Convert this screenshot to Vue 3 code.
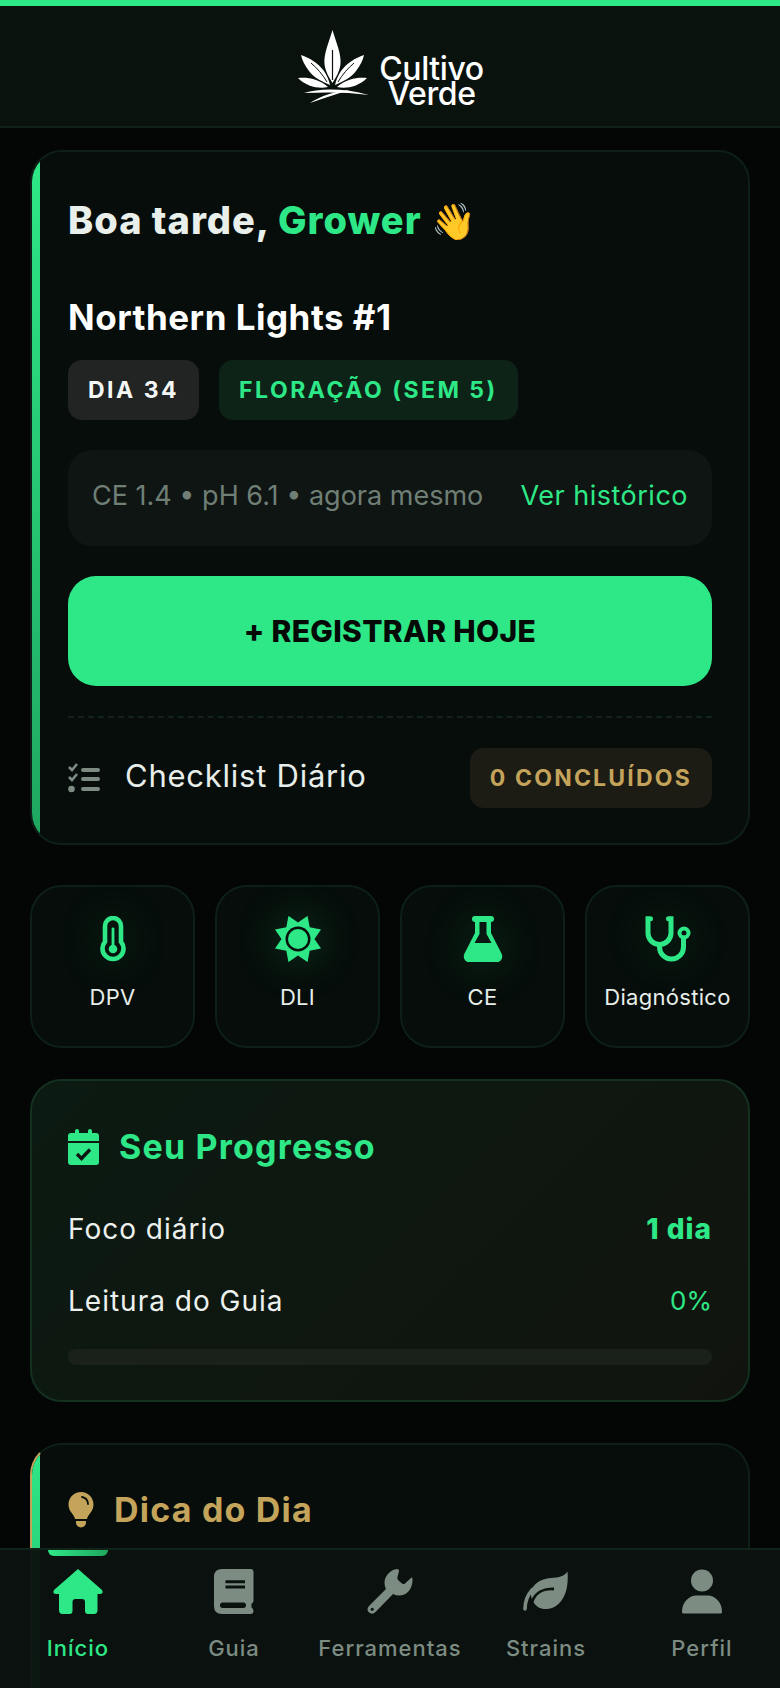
<template>
  <div class="app">
    <header class="header">
      <div class="logo">
        <svg class="logo__mark" viewBox="0 0 72 74" fill="#fff">
          <path d="M34.5 0C38 12 43.500 24 42.500 34C41.500 42 37.500 48 34.500 53C31.500 48 27.500 42 26.500 34C25.500 24 31 12 34.500 0Z" />
          <path d="M34.500 20V50" stroke="#0a120e" stroke-width="1.200" />
          <g v-for="side in logoSides" :key="side" :transform="side">
            <path d="M3 25C12 28 20 33 26 41C29 46 31 50 32 55C25 52 16 48 11 41C7 36 4 30 3 25Z" />
            <path d="M13 33C19 38 25 45 29 52" fill="none" stroke="#0a120e" stroke-width="1" />
            <path d="M0 48C8 47 20 48 30 57C21 59 9 57 0 48Z" />
          </g>
          <path d="M6 63C22 58 46 58 71 65C50 62 28 62 6 63Z" />
          <path d="M12 73C22 66 38 61 52 60C38 64 26 68 12 73Z" />
        </svg>
        <div class="logo__text">{{ "Cultivo\nVerde" }}</div>
      </div>
    </header>

    <main class="main">
      <section class="card card--hero">
        <h1 class="greeting">Boa tarde, <em>Grower</em> <span class="greeting__wave">👋</span></h1>
        <h2 class="plant">Northern Lights #1</h2>
        <div class="chips">
          <span class="chip chip--grey">DIA 34</span>
          <span class="chip chip--green">FLORAÇÃO (SEM 5)</span>
        </div>
        <div class="reading">
          <span class="reading__values">CE 1.4 • pH 6.1 • agora mesmo</span>
          <a class="reading__link">Ver histórico</a>
        </div>
        <button class="cta">+ REGISTRAR HOJE</button>
        <div class="checklist">
          <svg class="checklist__icon" viewBox="0 0 32 30" fill="none" stroke="#7c8c82">
            <path d="M1 4l3 3 5-6M1 14l3 3 5-6" stroke-width="2.600" />
            <path d="M15 7h15M15 16h15M15 26h15" stroke-width="4" stroke-linecap="round" />
            <circle cx="3.500" cy="26" r="3.300" fill="#7c8c82" stroke="none" />
          </svg>
          <span class="checklist__label">Checklist Diário</span>
          <span class="chip chip--gold">0 CONCLUÍDOS</span>
        </div>
      </section>

      <nav class="tools">
        <a class="tool">
          <svg class="tool__icon" width="26" height="46" viewBox="0 0 26 46" fill="none" stroke="#2ee887">
            <path d="M5 25.700V10a8 8 0 0 1 16 0v15.700a10.500 10.500 0 1 1-16 0z" stroke-width="4.600" />
            <path d="M13 13v18" stroke-width="2.800" stroke-linecap="round" />
            <circle cx="13" cy="33" r="4.300" fill="#2ee887" stroke="none" />
          </svg>
          <span>DPV</span>
        </a>
        <a class="tool">
          <svg class="tool__icon" width="46" height="46" viewBox="0 0 46 46">
            <polygon :points="sunPoints" fill="#2ee887" />
            <circle cx="23" cy="23" r="12.500" fill="#07110c" />
            <circle cx="23" cy="23" r="10" fill="#2ee887" />
          </svg>
          <span>DLI</span>
        </a>
        <a class="tool">
          <svg class="tool__icon" width="40" height="46" viewBox="0 0 40 46" fill="#2ee887">
            <path fill-rule="evenodd" d="M12 4V17L1.500 37.500C-.5 41.500 2 46 6 46H34C38 46 40.500 41.500 38.500 37.500L28 17V4ZM16.500 5V18L11.500 27H28.500L23.500 18V5Z" />
            <rect x="9" width="22" height="6" rx="3" />
          </svg>
          <span>CE</span>
        </a>
        <a class="tool">
          <svg class="tool__icon" width="46" height="46" viewBox="0 0 46 46" fill="none" stroke="#2ee887" stroke-width="5" stroke-linecap="round">
            <path d="M5.500 2.800H3V17a11.500 11.500 0 0 0 23 0V2.800H23.500" />
            <path d="M14.500 29v2a12 12 0 0 0 24 0v-9" />
            <circle cx="39" cy="17" r="4.500" stroke-width="4" />
          </svg>
          <span>Diagnóstico</span>
        </a>
      </nav>

      <section class="card card--progress">
        <h3 class="section-title section-title--green">
          <svg width="31" height="36" viewBox="0 0 31 36" fill="#2ee887">
            <rect x="7" width="4" height="7" rx="2" />
            <rect x="20" width="4" height="7" rx="2" />
            <path d="M3 4h25a3 3 0 0 1 3 3v5H0V7a3 3 0 0 1 3-3z" />
            <path d="M0 14h31v19a3 3 0 0 1-3 3H3a3 3 0 0 1-3-3z" />
            <path d="M9 25l4.500 4.500 8.500-9" fill="none" stroke="#0b1610" stroke-width="3.400" />
          </svg>
          Seu Progresso
        </h3>
        <div class="stat stat--first">
          <span>Foco diário</span>
          <strong>1 dia</strong>
        </div>
        <div class="stat">
          <span>Leitura do Guia</span>
          <span class="stat__value">{{ guideProgress }}%</span>
        </div>
        <div class="bar">
          <div class="bar__fill" :style="{ width: guideProgress + '%' }"></div>
        </div>
      </section>

      <section class="card card--tip">
        <h3 class="section-title section-title--gold">
          <svg width="26" height="36" viewBox="0 0 26 36" fill="#c4a35a">
            <path d="M13 0C5.800 0 .5 5.600.5 12.500c0 3.200 1.200 6 3 8.200 1.600 2 3 3.800 3.500 6.300h12c.5-2.500 1.900-4.300 3.500-6.300 1.800-2.200 3-5 3-8.200C25.500 5.600 20.200 0 13 0z" />
            <path d="M14 5a7.500 7.500 0 0 1 6 7" fill="none" stroke="#07100c" stroke-width="1.800" stroke-linecap="round" />
            <path d="M8 29h10v1.500a5 5 0 0 1-10 0z" />
          </svg>
          Dica do Dia
        </h3>
      </section>
    </main>

    <nav class="tabs">
      <a v-for="tab in tabs" :key="tab.label" :class="['tab', { 'tab--active': tab.active }]">
        <span v-if="tab.active" class="tab__marker"></span>
        <svg class="tab__icon" :width="tab.w" :height="tab.h" :viewBox="`0 0 ${tab.w} ${tab.h}`" fill="currentColor">
          <template v-if="tab.label === 'Início'">
            <path d="M25 0L49 21Q51 25 47 25H44.500V41Q44.500 45 41 45H35Q32 45 32 42V33Q32 30 29 30H22.500Q19.500 30 19.500 33V42Q19.500 45 16.500 45H9.500Q6 45 6 41V25H3Q-1 25 1 21Z" />
          </template>
          <template v-else-if="tab.label === 'Guia'">
            <path d="M8 0H36.500Q39.500 0 39.500 3V32Q39.500 34 37.500 34.500V38.500Q39.500 39.500 39.500 42Q39.500 45 36.500 45H8Q0 45 0 37V8Q0 0 8 0Z" />
            <path d="M11.500 11.200h19.500v3H11.500zM11.500 16.500h19.500v3H11.500z" fill="#0a120e" />
            <rect x="6" y="33.500" width="26" height="5.500" rx="2.700" fill="#0a120e" />
          </template>
          <template v-else-if="tab.label === 'Ferramentas'">
            <path d="M30 0C23 1 17.500 7 17.500 13.500C17.500 16 18 18 19 20L2 37Q-1 40.500 2 43.500Q5.500 46 8.500 43L26 25C28 26 30 26.500 32 26.500C40 26.500 46 20 45.500 9.500Q45.300 8 44 9L38 14.500Q36.500 15.500 35 14.500L31.500 11.500Q30 10 30.500 8L32 2Q32.300 0 30 0Z" />
            <circle cx="5.200" cy="40.300" r="1.500" fill="#0a120e" />
          </template>
          <template v-else-if="tab.label === 'Strains'">
            <path d="M44.500 0C42 4.500 36 6 28 6.500C17 7.500 9.500 12.500 8 21C7.500 24 8.500 27 10 30C13 35.500 18 38 24 37.500C37 36.500 46.500 23 44.500 0Z" />
            <path d="M31 17.500C22 17 12 20 9 31" fill="none" stroke="#0a120e" stroke-width="2.800" />
            <path d="M2 37.500C2 31 4 24 9.500 18" fill="none" stroke="currentColor" stroke-width="3.600" stroke-linecap="round" />
          </template>
          <template v-else>
            <circle cx="20" cy="11" r="11" />
            <path d="M1 44Q0 44 0 42C0 32 8 26 14 26H26C32 26 40 32 40 42Q40 44 39 44Z" />
          </template>
        </svg>
        <span class="tab__label">{{ tab.label }}</span>
      </a>
    </nav>
  </div>
</template>

<script setup>
const guideProgress = 0;

// folhas laterais do logo: original e espelhada
const logoSides = ["", "matrix(-1 0 0 1 69 0)"];

// sol de 8 pontas, alternando raio externo e interno
const sunPoints = Array.from({ length: 16 }, (_, i) => {
  const angle = ((i * 22.5 + 22.5 - 90) * Math.PI) / 180;
  const r = i % 2 === 0 ? 25 : 16.5;
  return `${(23 + r * Math.cos(angle)).toFixed(2)},${(23 + r * Math.sin(angle)).toFixed(2)}`;
}).join(" ");

const tabs = [
  { label: "Início", w: 50, h: 45, active: true },
  { label: "Guia", w: 40, h: 45 },
  { label: "Ferramentas", w: 46, h: 45 },
  { label: "Strains", w: 46, h: 40 },
  { label: "Perfil", w: 40, h: 44 },
];
</script>

<style>
html,
body {
  background: #030605;
}
</style>

<style scoped>
.app {
  position: relative;
  height: 1688px;
  overflow: hidden;
  background: #030605;
  border-top: 6px solid #2ee887;
  box-sizing: border-box;
  font-family: Inter, "Noto Sans", sans-serif;
  color: #f2f6f3;
}

.header {
  display: flex;
  align-items: center;
  justify-content: center;
  height: 122px;
  background: #0a120e;
  border-bottom: 2px solid #10201a;
  box-sizing: border-box;
}

.logo {
  display: flex;
  align-items: flex-end;
  gap: 9px;
  margin-top: 2px;
  padding-left: 2px;
}

.logo__mark {
  width: 72px;
  height: 74px;
}

.logo__text {
  margin-bottom: -2px;
  color: #fff;
  font-size: 32px;
  font-weight: 500;
  line-height: 25px;
  letter-spacing: -0.4px;
  text-align: center;
  white-space: pre-line;
}

.main {
  padding: 22px 30px 0;
}

.card {
  position: relative;
  overflow: hidden;
  border: 2px solid #0d1f17;
  border-radius: 32px;
  padding: 36px 36px 35px;
  background: #060d0a;
}

.card--hero::before,
.card--tip::before {
  content: "";
  position: absolute;
  top: 0;
  bottom: 0;
  left: 0;
  width: 8px;
  background: linear-gradient(180deg, #2ee887, #1fa65f);
}

.greeting {
  height: 64px;
  margin: 0;
  font-size: 38px;
  font-weight: 800;
  line-height: 64px;
  letter-spacing: 1px;
  color: #e9efeb;
}

.greeting em {
  font-style: normal;
  color: #2ee887;
}

.greeting__wave {
  font-family: "Noto Color Emoji", sans-serif;
  font-size: 36px;
  line-height: 1;
  letter-spacing: 0;
}

.plant {
  margin: 43px 0 0;
  font-size: 35px;
  font-weight: 700;
  line-height: 44px;
  letter-spacing: 0.5px;
  color: #fff;
}

.chips {
  display: flex;
  gap: 20px;
  margin-top: 21px;
}

.chip {
  display: flex;
  align-items: center;
  height: 60px;
  padding: 0 20px;
  border-radius: 14px;
  font-size: 23px;
  font-weight: 700;
  letter-spacing: 2.5px;
}

.chip--grey {
  background: #212423;
  color: #f4f7f5;
}

.chip--green {
  background: #0d2318;
  color: #2ee887;
}

.chip--gold {
  margin-left: auto;
  background: #1c1c14;
  letter-spacing: 2.2px;
  color: #c4a35a;
}

.reading {
  display: flex;
  align-items: center;
  justify-content: space-between;
  height: 96px;
  margin-top: 30px;
  padding: 0 24px 6px;
  border-radius: 24px;
  background: #0f1512;
  box-sizing: border-box;
  font-size: 27px;
}

.reading__values {
  color: #6f7f76;
}

.reading__link {
  color: #2ee887;
  letter-spacing: 0.5px;
}

.cta {
  display: block;
  width: 100%;
  height: 110px;
  margin-top: 30px;
  padding-bottom: 2px;
  border: 0;
  border-radius: 28px;
  background: #2ee887;
  color: #050a07;
  font-family: inherit;
  font-size: 30px;
  font-weight: 800;
  letter-spacing: 0.3px;
}

.checklist {
  display: flex;
  align-items: center;
  margin-top: 30px;
  padding-top: 30px;
  border-top: 2px dashed #12231a;
}

.checklist__icon {
  width: 32px;
  height: 30px;
  flex: none;
}

.checklist__label {
  margin: -5px 0 0 25px;
  font-size: 31px;
  letter-spacing: 0.75px;
  color: #e8eeea;
}

.tools {
  display: grid;
  grid-template-columns: repeat(4, 1fr);
  gap: 20px;
  margin: 40px 0 31px;
}

.tool {
  display: flex;
  flex-direction: column;
  align-items: center;
  height: 163px;
  padding-top: 29px;
  border: 2px solid #0d1f17;
  border-radius: 32px;
  background: #060d0a;
  box-sizing: border-box;
  font-size: 22px;
  line-height: 32px;
  letter-spacing: 0.3px;
  color: #e8eeea;
}

.tool__icon {
  height: 46px;
  margin-bottom: 19px;
  filter: drop-shadow(0 0 22px rgba(46, 232, 135, 0.24));
}

.card--progress {
  padding-top: 44px;
  border-color: #14301f;
  background: linear-gradient(135deg, #0b1a12, #11140e);
}

.section-title {
  display: flex;
  align-items: center;
  gap: 20px;
  margin: 0;
  font-size: 34px;
  font-weight: 700;
  line-height: 44px;
  letter-spacing: 1.2px;
}

.section-title--green {
  color: #2ee887;
}

.section-title--gold {
  color: #c4a35a;
}

.stat {
  display: flex;
  justify-content: space-between;
  margin-top: 32px;
  font-size: 28px;
  line-height: 40px;
  letter-spacing: 1px;
  color: #edf1ee;
}

.stat--first {
  margin-top: 40px;
}

.stat strong {
  font-weight: 800;
  color: #2ee887;
}

.stat__value {
  font-size: 26px;
  letter-spacing: 0;
  color: #2ee887;
}

.bar {
  height: 16px;
  margin-top: 28px;
  border-radius: 8px;
  background: #1a211b;
}

.bar__fill {
  height: 100%;
  border-radius: 8px;
  background: #2ee887;
}

.card--tip {
  height: 400px;
  margin-top: 41px;
  padding-top: 43px;
  border-left-color: #c4a35a;
  box-sizing: border-box;
}

.tabs {
  position: absolute;
  left: 0;
  right: 0;
  bottom: 0;
  display: grid;
  grid-template-columns: repeat(5, 1fr);
  height: 140px;
  border-top: 2px solid #10241a;
  background: rgba(10, 18, 14, 0.97);
  box-sizing: border-box;
}

.tab {
  position: relative;
  display: flex;
  flex-direction: column;
  align-items: center;
  padding-top: 19px;
  color: #7c8c82;
}

.tab--active {
  color: #2ee887;
}

.tab__marker {
  position: absolute;
  top: 0;
  width: 60px;
  height: 6px;
  border-radius: 0 0 6px 6px;
  background: linear-gradient(90deg, #2ee887, #1fa65f);
}

.tab__icon {
  height: 45px;
  margin-bottom: 18px;
}

.tab__label {
  font-size: 22px;
  font-weight: 500;
  line-height: 32px;
  letter-spacing: 1px;
}
</style>
